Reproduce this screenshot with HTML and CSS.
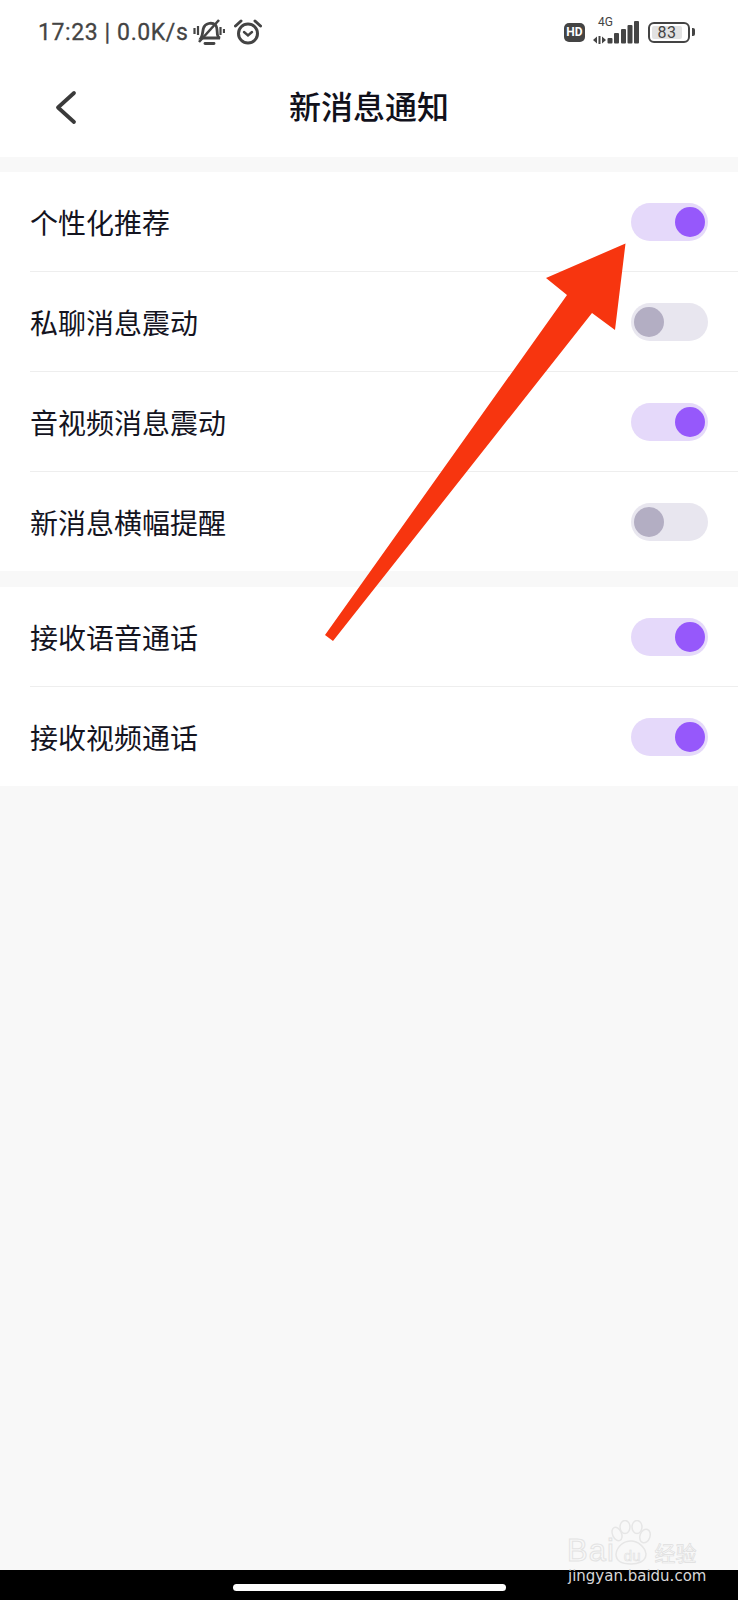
FILE: index.html
```html
<!DOCTYPE html>
<html>
    <head>
        <title>新消息通知</title>
        <link rel="stylesheet" href="styles.css">
    </head>
    <body>
        <div class="page">
            <div class="statusbar">
                <div class="status-left">
                    <span class="status-text">17:23 | 0.0K/s</span>
                    <svg class="icon-bell" width="32" height="26" viewBox="0 0 32 26" fill="none" stroke="#444" stroke-width="2.8">
                        <path d="M8 19 C10 16 9.500 12 10.500 9 C12 4 19 3 22.500 6 C24.500 8 24 14 24.500 16 C24.800 17.500 25.500 18.500 27 19 Z"/>
                        <path d="M12 24.500 H21" stroke-linecap="round"/>
                        <path d="M6 23 L26 1" stroke-width="2.6"/>
                        <path d="M1.500 9 V15 M5 7 V16 M27.500 8 V16 M31 10 V14" stroke-width="2.2"/>
                    </svg>
                    <svg class="icon-alarm" width="28" height="26" viewBox="0 0 28 26" fill="none" stroke="#444" stroke-width="3">
                        <circle cx="14" cy="14.500" r="9.500"/>
                        <path d="M10 13 L14 16.500 L18 13" stroke-width="2.4" stroke-linecap="round"/>
                        <path d="M1.500 7 L7 2 M26.500 7 L21 2" stroke-linecap="round"/>
                    </svg>
                </div>
                <div class="status-right">
                    <span class="hd">HD</span>
                    <div class="network">
                        <span class="net-label">4G</span>
                        <svg width="46" height="24" viewBox="0 0 46 24" fill="#444">
                            <path d="M0 20 L4 16.500 V23.500 Z M5.500 16 H7.500 V24 H5.500 Z M9 16.500 L13 20 L9 23.500 Z"/>
                            <rect x="14.500" y="18" width="5" height="5.500" rx="1"/>
                            <rect x="21" y="13" width="5" height="10.500" rx="1"/>
                            <rect x="28" y="9" width="5" height="14.500" rx="1"/>
                            <rect x="34.500" y="5" width="5" height="18.500" rx="1"/>
                            <rect x="41" y="1" width="5" height="22.500" rx="1"/>
                        </svg>
                    </div>
                    <div class="battery">
                        <div class="battery-body"><span class="battery-level">83</span></div>
                        <div class="battery-tip"></div>
                    </div>
                </div>
            </div>

            <div class="header">
                <svg class="back" width="24" height="36" viewBox="0 0 24 36" fill="none" stroke="#3a3a3a" stroke-width="3.800" stroke-linecap="round" stroke-linejoin="round">
                    <path d="M20 3 L4 17.500 L20 32"/>
                </svg>
                <div class="title">新消息通知</div>
            </div>

            <div class="group">
                <div class="row"><span class="label">个性化推荐</span><div class="switch on"><div class="knob"></div></div></div>
                <div class="row"><span class="label">私聊消息震动</span><div class="switch"><div class="knob"></div></div></div>
                <div class="row"><span class="label">音视频消息震动</span><div class="switch on"><div class="knob"></div></div></div>
                <div class="row"><span class="label">新消息横幅提醒</span><div class="switch"><div class="knob"></div></div></div>
            </div>

            <div class="group">
                <div class="row"><span class="label">接收语音通话</span><div class="switch on"><div class="knob"></div></div></div>
                <div class="row"><span class="label">接收视频通话</span><div class="switch on"><div class="knob"></div></div></div>
            </div>

            <div class="filler"></div>

            <div class="navbar">
                <div class="homebar"></div>
            </div>

            <!-- annotation drawn over the screenshot -->
            <svg class="arrow" width="738" height="1600" viewBox="0 0 738 1600">
                <polygon fill="#f7350f" points="625.500,243.500 546,278 567,295 325,635 333,641 592,313 615,330"/>
            </svg>

            <div class="watermark">
                <svg class="paw" width="46" height="46" viewBox="0 0 46 46" fill="none" stroke="#e6e6e6" stroke-width="1.500">
                    <ellipse cx="10" cy="14" rx="4.500" ry="7" transform="rotate(-25 10 14)"/>
                    <ellipse cx="18" cy="7" rx="5" ry="6.500"/>
                    <ellipse cx="30" cy="7" rx="5" ry="6.500"/>
                    <ellipse cx="38" cy="16" rx="5" ry="7" transform="rotate(20 38 16)"/>
                    <path d="M9 34 C10 26 17 21 24 21 C31 21 38 27 39 34 C39 42 30 44 24 44 C16 44 9 42 9 34 Z"/>
                </svg>
                <div class="wm-logo"><span class="wm-latin">Bai</span><span class="wm-du">du</span><span class="wm-cn">经验</span></div>
                <div class="wm-url">jingyan.baidu.com</div>
            </div>
        </div>
    </body>
</html>
```

FILE: styles.css
```css
body {
    margin: 0;
    font-family: "Noto Sans CJK SC", "Noto Sans", sans-serif;
    background: #f8f8f8;
}
.page {
    position: relative;
    display: flex;
    flex-direction: column;
    width: 738px;
    height: 1600px;
    overflow: hidden;
}

/* status bar */
.statusbar {
    display: flex;
    justify-content: space-between;
    align-items: center;
    height: 62px;
    padding: 2px 43px 0 38px;
    box-sizing: border-box;
    background: #fff;
    color: #444;
}
.status-left, .status-right {
    display: flex;
    align-items: center;
}
.status-text {
    font-family: Roboto, sans-serif;
    font-size: 23px;
    letter-spacing: 0.6px;
    -webkit-text-stroke: 0.3px #444;
}
.icon-bell {
    margin-left: 5px;
}
.icon-alarm {
    margin-left: 9px;
}
.hd {
    width: 21px;
    height: 19px;
    border-radius: 5px;
    background: #444;
    color: #fff;
    font-family: Roboto, sans-serif;
    font-size: 12px;
    font-weight: bold;
    line-height: 19px;
    text-align: center;
}
.network {
    position: relative;
    margin-left: 8px;
    width: 46px;
    height: 24px;
}
.net-label {
    position: absolute;
    left: 5px;
    top: -4px;
    font-family: Roboto, sans-serif;
    font-size: 12px;
    line-height: 12px;
}
.battery {
    display: flex;
    align-items: center;
    margin-left: 9px;
}
.battery-body {
    display: flex;
    align-items: center;
    width: 42px;
    height: 21px;
    padding: 2px;
    box-sizing: border-box;
    border: 2px solid #444;
    border-radius: 6px;
}
.battery-level {
    width: 30px;
    height: 13px;
    background: #e2e2e2;
    border-radius: 2px;
    font-family: Roboto, sans-serif;
    font-size: 16px;
    line-height: 13px;
    text-align: center;
    letter-spacing: 0.5px;
}
.battery-tip {
    width: 3px;
    height: 8px;
    margin-left: 2px;
    border-radius: 0 2px 2px 0;
    background: #444;
}

/* header */
.header {
    position: relative;
    display: flex;
    justify-content: center;
    align-items: center;
    height: 95px;
    padding-bottom: 10px;
    box-sizing: border-box;
    margin-bottom: 15px;
    background: #fff;
}
.back {
    position: absolute;
    left: 54px;
    top: 28px;
}
.title {
    font-size: 32px;
    font-weight: 500;
    color: #11111b;
    line-height: 44px;
}

/* settings list */
.group {
    margin-bottom: 16px;
    padding-left: 30px;
    background: #fff;
}
.group:last-of-type {
    margin-bottom: 0;
}
.row {
    display: flex;
    justify-content: space-between;
    align-items: center;
    height: 100px;
    padding-right: 30px;
    box-sizing: border-box;
    border-bottom: 1px solid #eeeeee;
}
.row:last-child {
    height: 99px;
    border-bottom: none;
}
.label {
    font-size: 28px;
    color: #14141f;
    line-height: 40px;
}
.switch {
    display: flex;
    align-items: center;
    width: 77px;
    height: 38px;
    padding: 0 3px;
    box-sizing: border-box;
    border-radius: 19px;
    background: #e8e6ef;
}
.knob {
    width: 30px;
    height: 30px;
    border-radius: 50%;
    background: #b3aec3;
}
.switch.on {
    justify-content: flex-end;
    background: #e5d9fa;
}
.switch.on .knob {
    background: #9658fb;
}

.filler {
    flex: 1;
}

/* gesture bar */
.navbar {
    display: flex;
    justify-content: center;
    height: 30px;
    background: #000;
}
.homebar {
    width: 273px;
    height: 7px;
    margin-top: 14px;
    border-radius: 4px;
    background: #fff;
}

.arrow {
    position: absolute;
    left: 0;
    top: 0;
}

/* baidu watermark */
.watermark {
    position: absolute;
    left: 567px;
    top: 1518px;
    width: 130px;
    height: 66px;
}
.paw {
    position: absolute;
    left: 40px;
    top: 2px;
}
.wm-logo {
    position: absolute;
    left: 0;
    top: 18px;
    display: flex;
    align-items: baseline;
    font-family: "Liberation Sans", sans-serif;
    line-height: 30px;
    white-space: nowrap;
}
.wm-latin {
    font-size: 31px;
    color: #f8f8f8;
    -webkit-text-stroke: 1px #e3e3e3;
    letter-spacing: 1px;
}
.wm-du {
    margin-left: 9px;
    font-size: 15px;
    color: #f8f8f8;
    -webkit-text-stroke: 0.6px #e0e0e0;
}
.wm-cn {
    margin-left: 14px;
    font-family: "Noto Sans CJK SC", sans-serif;
    font-size: 21px;
    color: #f8f8f8;
    -webkit-text-stroke: 0.7px #dedede;
}
.wm-url {
    position: absolute;
    left: 1px;
    top: 49px;
    font-family: "DejaVu Sans", sans-serif;
    font-size: 15px;
    line-height: 18px;
    color: #d8d8d8;
    white-space: nowrap;
}
```
